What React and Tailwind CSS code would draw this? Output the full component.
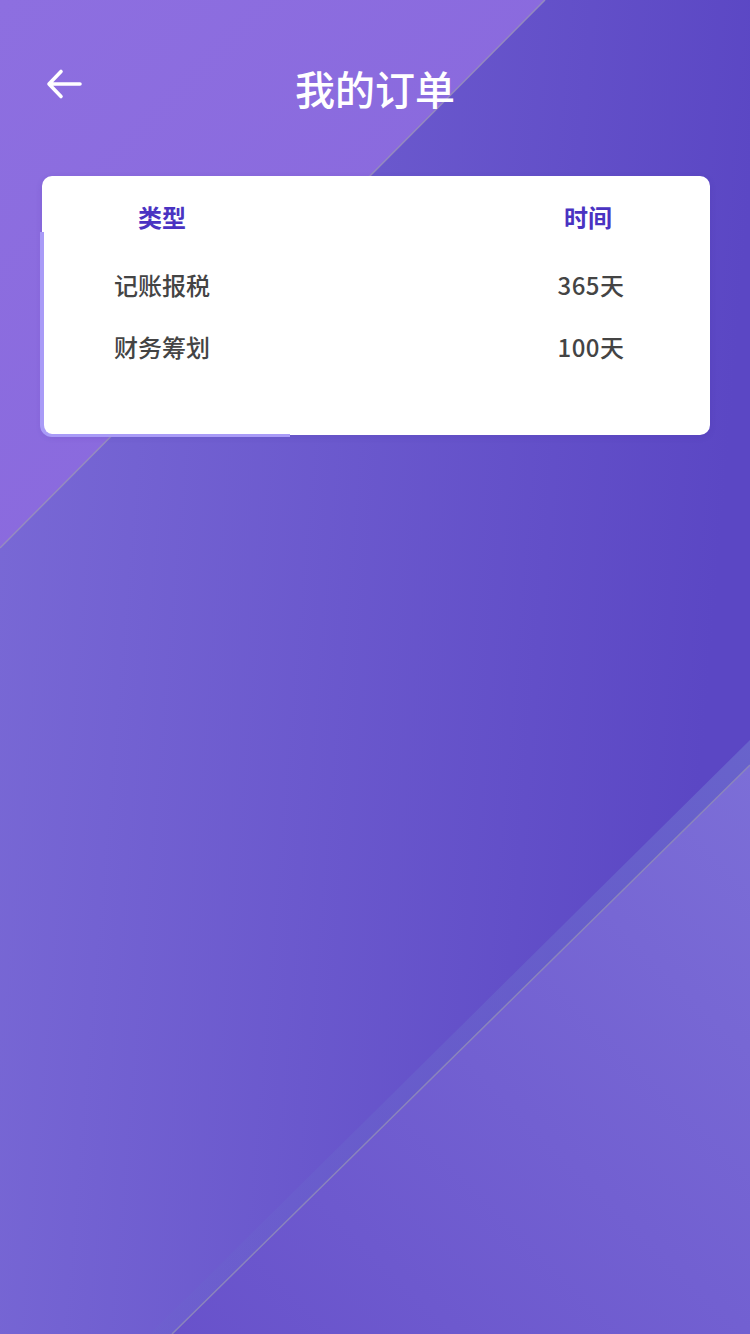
import React from "react";

function Background() {
  return (
    <svg className="absolute inset-0" width="750" height="1334" viewBox="0 0 750 1334">
      <defs>
        <linearGradient id="base" x1="0" y1="0" x2="1" y2="0.15">
          <stop offset="0" stopColor="#7a6ad6" />
          <stop offset="1" stopColor="#5b47c4" />
        </linearGradient>
        <linearGradient id="tl" x1="0" y1="0" x2="1" y2="1">
          <stop offset="0" stopColor="#8d6fe0" />
          <stop offset="1" stopColor="#8866dc" />
        </linearGradient>
        <linearGradient id="br" x1="1" y1="0" x2="0" y2="1">
          <stop offset="0" stopColor="#7c6ed7" />
          <stop offset="1" stopColor="#6852cb" />
        </linearGradient>
        <linearGradient id="band" x1="1" y1="0" x2="0" y2="1">
          <stop offset="0" stopColor="#6a66cc" stopOpacity="0.9" />
          <stop offset="1" stopColor="#6a66cc" stopOpacity="0.2" />
        </linearGradient>
      </defs>
      <rect x="0" y="0" width="750" height="1334" fill="url(#base)" />
      <polygon points="0,0 545,0 0,548" fill="url(#tl)" />
      <line x1="545" y1="0" x2="0" y2="548" stroke="#9a94b8" strokeOpacity="0.8" strokeWidth="1.5" />
      <polygon points="750,740 750,765 172,1334 150,1334" fill="url(#band)" />
      <polygon points="750,765 750,1334 172,1334" fill="url(#br)" />
      <line x1="750" y1="765" x2="172" y2="1334" stroke="#8f8cb8" strokeOpacity="0.85" strokeWidth="1.5" />
    </svg>
  );
}

export default function App() {
  const font = { fontFamily: '"Noto Sans CJK SC", "Noto Sans", sans-serif' };
  const rows = [
    ["记账报税", "365天"],
    ["财务筹划", "100天"],
  ];
  return (
    <div className="relative w-[750px] h-[1334px] overflow-hidden" style={font}>
      <Background />
      <div className="relative flex flex-col">
        <div className="relative h-[176px]">
          <svg className="absolute left-[44px] top-[68px]" width="40" height="32" viewBox="0 0 40 32">
            <path d="M5 16 H36 M17 3.5 L5 16 L17 28.5" fill="none" stroke="#ffffff" strokeWidth="3.6" strokeLinecap="round" strokeLinejoin="round" />
          </svg>
          <div className="pt-[64px] text-center text-[40px] leading-[48px] font-medium text-white">我的订单</div>
        </div>
        <div className="relative ml-[42px] mr-[40px]">
          <div className="relative h-[259px] rounded-[10px] bg-white shadow-[0_2px_6px_rgba(60,40,150,0.15)]">
            <div className="flex justify-between pt-[25px]">
              <div className="w-[240px] text-center text-[24px] leading-[32px] font-semibold text-[#4a33c2]">类型</div>
              <div className="w-[244px] text-center text-[24px] leading-[32px] font-semibold text-[#4a33c2]">时间</div>
            </div>
            <div className="mt-[36px] flex flex-col gap-[30px]">
              {rows.map(([a, b]) => (
                <div key={a} className="flex justify-between">
                  <div className="w-[240px] text-center text-[24px] leading-[32px] font-medium text-[#444444]">{a}</div>
                  <div className="w-[238px] text-center text-[24px] leading-[32px] font-medium text-[#444444] tracking-[0.5px]">{b}</div>
                </div>
              ))}
            </div>
          </div>
          <div className="absolute left-[-2px] top-[56px] bottom-[-2px] w-[250px] rounded-bl-[12px] border-l-[4px] border-b-[3px] border-[#a99bf7]" />
        </div>
      </div>
    </div>
  );
}
